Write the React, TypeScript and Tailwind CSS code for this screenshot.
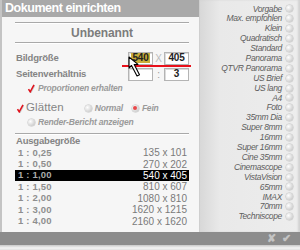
import React from "react";

const presets = [
  "Vorgabe",
  "Max. empfohlen",
  "Klein",
  "Quadratisch",
  "Standard",
  "Panorama",
  "QTVR Panorama",
  "US Brief",
  "US lang",
  "A4",
  "Foto",
  "35mm Dia",
  "Super 8mm",
  "16mm",
  "Super 16mm",
  "Cine 35mm",
  "Cinemascope",
  "VistaVision",
  "65mm",
  "IMAX",
  "70mm",
  "Techniscope",
];

const sizes = [
  ["1 : 0,25", "135 x 101"],
  ["1 : 0,50", "270 x 202"],
  ["1 : 1,00", "540 x 405"],
  ["1 : 1,50", "810 x 607"],
  ["1 : 2,00", "1080 x 810"],
  ["1 : 3,00", "1620 x 1215"],
  ["1 : 4,00", "2160 x 1620"],
];

function Check() {
  return (
    <svg width="8" height="9" viewBox="0 0 8 9" className="shrink-0">
      <path d="M1.5 5.2 L3.2 7.8 L7 0.8" fill="none" stroke="#c8c8c8" strokeWidth="1.6" transform="translate(0.6 0.6)" />
      <path d="M1.5 5.2 L3.2 7.8 L7 0.8" fill="none" stroke="#e3101a" strokeWidth="1.5" />
    </svg>
  );
}

function Radio({ on = false }: { on?: boolean }) {
  return (
    <span className="inline-flex h-[7px] w-[7px] shrink-0 items-center justify-center rounded-full bg-[radial-gradient(circle_at_35%_35%,#ffffff,#d0d0d0_70%,#b8b8b8)] shadow-[0_0_0_0.5px_#c4c4c4]">
      {on && <span className="h-[4px] w-[4px] rounded-full bg-[#e8484a]" />}
    </span>
  );
}

function Rule() {
  return <div className="h-[2px] border-t border-[#a9a9a9] bg-white" />;
}

function Field({ children }: { children?: React.ReactNode }) {
  return (
    <div className="flex h-[13px] items-center justify-center border border-[#b4b4b4] bg-white text-[10px] leading-none text-[#222] shadow-[inset_1px_1px_0_#dcdcdc]">
      {children}
    </div>
  );
}

export default function App() {
  return (
    <div className="relative flex h-[250px] w-[300px] flex-col overflow-hidden bg-[#e0e0e0] font-['Liberation_Sans',Arial,sans-serif]">
      <div className="flex h-[232px]">
        <div className="flex w-[199px] flex-col border-l-2 border-[#c4c4c4] bg-[#f6f6f6]">
          <div className="flex h-[17px] items-center bg-[#a9a9a9] pl-[3px] text-[12.5px] font-bold tracking-[-0.45px] text-white">
            Dokument einrichten
          </div>
          <div className="flex flex-col pl-[13px] pr-[10px]">
            <div className="mt-[5px]">
              <Rule />
            </div>
            <div className="flex h-[18px] items-center justify-center text-[12px] font-bold tracking-[-0.1px] text-[#7c7c7c]">
              Unbenannt
            </div>
            <Rule />

            <div className="mt-[6px] flex h-[16px] items-center text-[9.5px] font-bold tracking-[-0.2px] text-[#848484]">
              <span className="pl-[1px]">Bildgröße</span>
              <div className="ml-auto flex items-center">
                <div className="w-[25px]">
                  <Field>
                    <span className="bg-[#c9ad3a] px-[1px]">540</span>
                  </Field>
                </div>
                <span className="w-[11px] text-center text-[10px] font-normal text-[#bbb]">X</span>
                <div className="w-[25px]">
                  <Field>405</Field>
                </div>
              </div>
            </div>
            <div className="flex h-[16px] items-center text-[9.5px] font-bold tracking-[-0.2px] text-[#848484]">
              <span className="pl-[1px]">Seitenverhältnis</span>
              <div className="ml-auto flex items-center">
                <div className="w-[25px]">
                  <Field />
                </div>
                <span className="w-[11px] text-center text-[10px] font-normal text-[#999]">:</span>
                <div className="w-[25px]">
                  <Field>3</Field>
                </div>
              </div>
            </div>
            <div className="flex h-[12px] items-center gap-[3px] pl-[12px] text-[8.5px] font-bold italic tracking-[-0.2px] text-[#9a9a9a]">
              <Check />
              <span>Proportionen erhalten</span>
            </div>

            <div className="mt-[6px] flex h-[16px] items-center">
              <div className="flex items-center gap-[2px] pl-[1px]">
                <Check />
                <span className="text-[11.5px] tracking-[0.1px] text-[#858585]">Glätten</span>
              </div>
              <div className="ml-[21px] flex items-center gap-[3px] text-[8.5px] font-bold italic tracking-[-0.2px] text-[#9a9a9a]">
                <Radio />
                <span>Normal</span>
              </div>
              <div className="ml-[9px] flex items-center gap-[3px] text-[8.5px] font-bold italic tracking-[-0.2px] text-[#9a9a9a]">
                <Radio on />
                <span>Fein</span>
              </div>
            </div>
            <div className="flex h-[12px] items-center gap-[3px] pl-[13px] text-[8.5px] font-bold italic tracking-[-0.2px] text-[#9a9a9a]">
              <Radio />
              <span>Render-Bericht anzeigen</span>
            </div>

            <div className="mt-[5px]">
              <Rule />
            </div>
            <div className="flex h-[12px] items-center pl-[1px] text-[9.5px] font-bold tracking-[-0.2px] text-[#848484]">
              Ausgabegröße
            </div>
            <div className="flex flex-col">
              {sizes.map(([ratio, px], i) => (
                <div
                  key={ratio}
                  className={
                    i === 2
                      ? "flex h-[11.4px] items-center justify-between bg-black pl-[3px] pr-[2px] text-[9.5px] font-bold text-[#aaa]"
                      : "flex h-[11.4px] items-center justify-between pl-[3px] pr-[2px] text-[9.5px] font-bold text-[#8e8e8e]"
                  }
                >
                  <span className="tracking-[0.2px]">{ratio}</span>
                  <span className={i === 2 ? "font-normal text-[10px] text-white" : "font-normal text-[10px] text-[#7a7a7a]"}>{px}</span>
                </div>
              ))}
            </div>
          </div>
        </div>

        <div className="flex flex-1 flex-col border-l border-[#cfcfcf] bg-[linear-gradient(90deg,#d8d8d8,#e9e9e9_20%,#ededed)] pt-[4px] pr-[7px] shadow-[inset_-2px_0_2px_#d2d2d2]">
          {presets.map((p) => (
            <div key={p} className="flex h-[9.9px] items-center justify-end gap-[4px] text-[8.5px] italic tracking-[-0.35px] text-[#5e5e5e]">
              <span>{p}</span>
              <Radio />
            </div>
          ))}
        </div>
      </div>

      <div className="flex h-[13px] items-center justify-end gap-[6px] bg-[#8c8c8c] pr-[9px] text-[11px] font-bold text-[#c4c4c4]">
        <span>✘</span>
        <span>✔</span>
      </div>
      <div className="flex-1 bg-[linear-gradient(180deg,#c8c8c8,#f4f4f4_60%,#e0e0e0)]" />

      <div className="absolute left-[122px] top-[65px] h-[2px] w-[69px] bg-[#e8101a]" />
      <svg className="absolute left-[128px] top-[56px]" width="14" height="22" viewBox="0 0 14 22">
        <path d="M1 1 L1 12 L3.5 9.5 L9 20 L11.5 18.8 L6.2 8.6 L10 8.4 Z" fill="white" stroke="black" strokeWidth="1.1" strokeLinejoin="round" />
      </svg>
    </div>
  );
}
